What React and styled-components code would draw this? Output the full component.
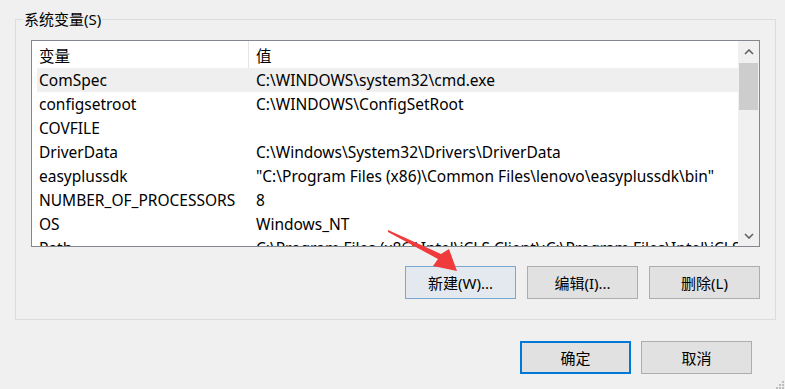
import React from "react"
import styled, { createGlobalStyle } from "styled-components"

const GlobalStyle = createGlobalStyle`
  html, body {
    margin: 0;
    padding: 0;
    background: #f0f0f0;
    overflow: hidden;
  }
  body {
    font-family: "Noto Sans", "Noto Sans CJK SC", sans-serif;
    font-size: 15px;
    color: #000;
  }
`

const Page = styled.div`
  position: relative;
  width: 785px;
  height: 389px;
  display: flex;
  flex-direction: column;
`

const GroupBox = styled.fieldset`
  margin: 9px 9px 0 15px;
  padding: 11px 15px 20px 15px;
  border: 1px solid #dcdcdc;
  min-width: 0;
  display: flex;
  flex-direction: column;
  gap: 19px;
`

const Legend = styled.legend`
  margin-left: -8px;
  padding: 0 1px;
  line-height: 20px;
  font-size: 15px;
`

const ListBox = styled.div`
  height: 207px;
  border: 1px solid #828790;
  background: #fff;
  display: flex;
  overflow: hidden;
  box-sizing: border-box;
`

const ListArea = styled.div`
  flex: 1;
  padding-left: 5px;
  overflow: hidden;
  font-size: 15.5px;
`

const Line = styled.div`
  display: grid;
  grid-template-columns: 212px 1fr;
  height: ${(p) => (p.$header ? 27 : 24)}px;
  background: ${(p) => (p.$selected ? "#efefef" : "#fff")};
  white-space: nowrap;
`

const Cell = styled.div`
  display: flex;
  align-items: center;
  padding-left: ${(p) => (p.$first ? 2 : 7)}px;
  padding-top: ${(p) => (p.$header ? 2 : 0)}px;
  overflow: hidden;
  border-right: ${(p) => (p.$divider ? "1px solid #e5e5e5" : "none")};
`

const ScrollBar = styled.div`
  width: 21px;
  background: #f0f0f0;
  display: flex;
  flex-direction: column;
`

const ScrollArrow = styled.div`
  height: 21px;
  display: flex;
  align-items: center;
  justify-content: center;
`

const Track = styled.div`
  flex: 1;
  padding: 1px 1px 0 1px;
`

const Thumb = styled.div`
  height: 47px;
  background: #cdcdcd;
`

const ButtonRow = styled.div`
  display: flex;
  justify-content: flex-end;
  gap: 11px;
`

const Button = styled.button`
  width: 111px;
  height: 33px;
  box-sizing: border-box;
  font-family: "Noto Sans", "Noto Sans CJK SC", sans-serif;
  font-size: 15px;
  color: #000;
  padding: 0;
  border: ${(p) =>
    p.$primary ? "2px solid #0078d7" : p.$hot ? "1px solid #7aa6d2" : "1px solid #adadad"};
  background: ${(p) => (p.$hot ? "#e3e9ef" : "#e1e1e1")};
`

const Footer = styled.div`
  display: flex;
  justify-content: flex-end;
  gap: 10px;
  margin-top: 21px;
  padding-right: 33px;
`

const ArrowMark = styled.svg`
  position: absolute;
  left: 385px;
  top: 226px;
`

const Grip = styled.svg`
  position: absolute;
  right: 0;
  bottom: 0;
`

const rows = [
  ["ComSpec", "C:\\WINDOWS\\system32\\cmd.exe"],
  ["configsetroot", "C:\\WINDOWS\\ConfigSetRoot"],
  ["COVFILE", ""],
  ["DriverData", "C:\\Windows\\System32\\Drivers\\DriverData"],
  ["easyplussdk", "\"C:\\Program Files (x86)\\Common Files\\lenovo\\easyplussdk\\bin\""],
  ["NUMBER_OF_PROCESSORS", "8"],
  ["OS", "Windows_NT"],
  ["Path", "C:\\Program Files (x86)\\Intel\\iCLS Client\\;C:\\Program Files\\Intel\\iCLS Client\\;C:\\WINDOWS"],
]

const Chevron = ({ down }) => (
  <svg width="10" height="6" viewBox="0 0 10 6">
    <polyline
      points={down ? "1,1 5,5 9,1" : "1,5 5,1 9,5"}
      fill="none"
      stroke="#606060"
      strokeWidth="1.6"
    />
  </svg>
)

export default function App() {
  return (
    <Page>
      <GlobalStyle />
      <GroupBox>
        <Legend>系统变量(S)</Legend>
        <ListBox>
          <ListArea>
            <Line $header>
              <Cell $first $header $divider>变量</Cell>
              <Cell $header>值</Cell>
            </Line>
            {rows.map(([name, value], i) => (
              <Line key={name} $selected={i === 0}>
                <Cell $first>{name}</Cell>
                <Cell>{value}</Cell>
              </Line>
            ))}
          </ListArea>
          <ScrollBar>
            <ScrollArrow><Chevron /></ScrollArrow>
            <Track><Thumb /></Track>
            <ScrollArrow><Chevron down /></ScrollArrow>
          </ScrollBar>
        </ListBox>
        <ButtonRow>
          <Button $hot>新建(W)...</Button>
          <Button>编辑(I)...</Button>
          <Button>删除(L)</Button>
        </ButtonRow>
      </GroupBox>
      <Footer>
        <Button $primary>确定</Button>
        <Button>取消</Button>
      </Footer>

      {/* red annotation arrow drawn over the dialog */}
      <ArrowMark width="80" height="50" viewBox="0 0 80 50">
        <polygon
          points="3,4 56,28 64,23 72,45 48,40 53,33 3,6"
          fill="#ef3b3b"
        />
      </ArrowMark>

      <Grip width="10" height="8" viewBox="0 0 10 8">
        <rect x="7" y="0" width="2" height="2" fill="#bdbdbd" />
        <rect x="4" y="3" width="2" height="2" fill="#bdbdbd" />
        <rect x="7" y="3" width="2" height="2" fill="#bdbdbd" />
        <rect x="1" y="6" width="2" height="2" fill="#bdbdbd" />
        <rect x="4" y="6" width="2" height="2" fill="#bdbdbd" />
        <rect x="7" y="6" width="2" height="2" fill="#bdbdbd" />
      </Grip>
    </Page>
  )
}
